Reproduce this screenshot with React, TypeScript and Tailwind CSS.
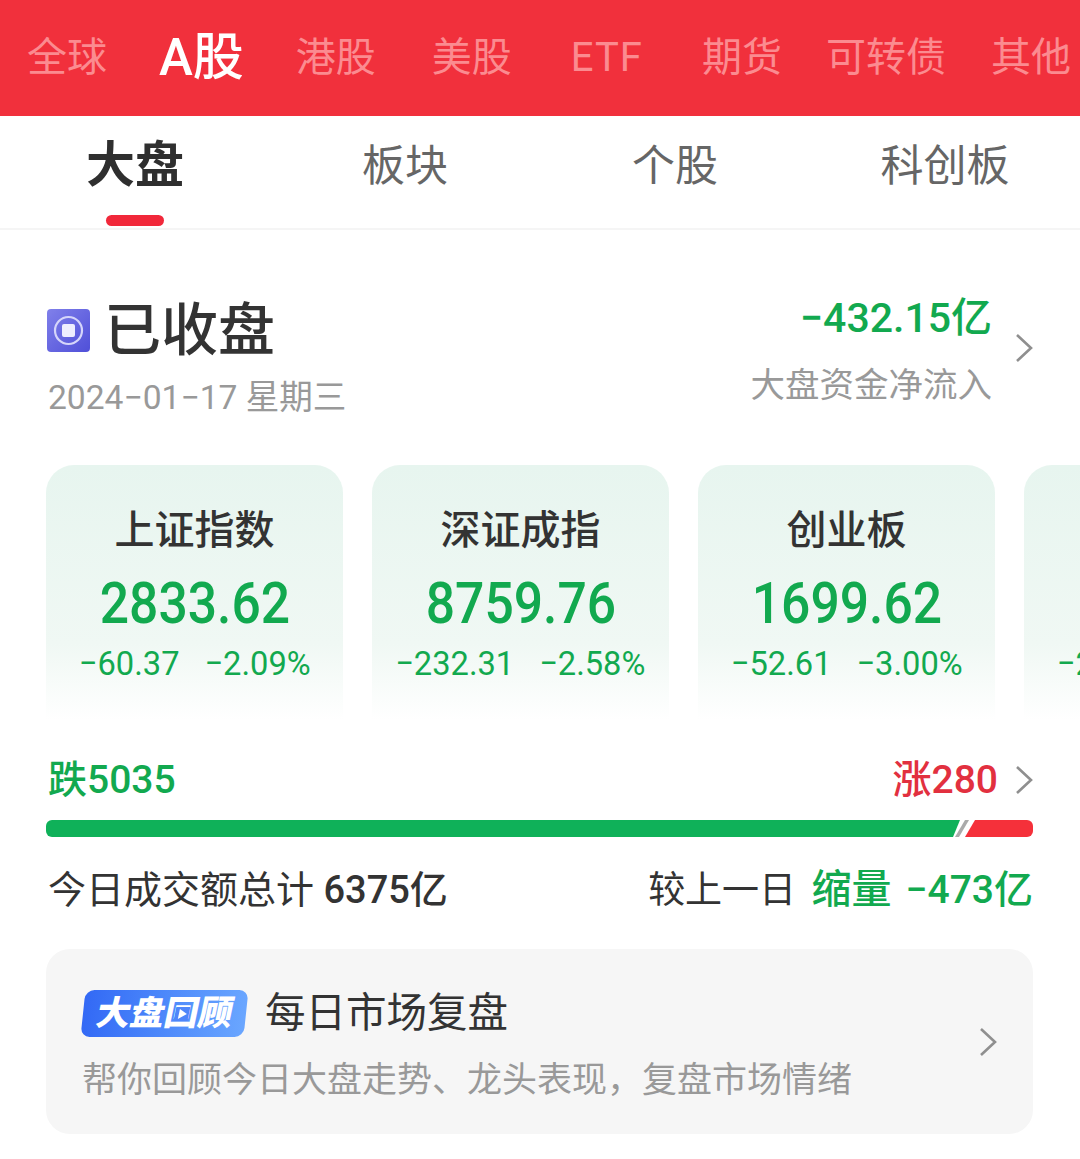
const cjk = '[font-family:Roboto,"Noto_Sans_CJK_SC",sans-serif]';

const markets = [
  { label: '全球', className: 'text-[40px] text-[#fb8b90]' },
  { label: 'A股', className: 'ml-[52px] text-[51px] font-medium text-white' },
  { label: '港股', className: 'ml-[52px] text-[40px] text-[#fb8b90]' },
  { label: '美股', className: 'ml-[56px] text-[40px] text-[#fb8b90]' },
  { label: 'ETF', className: 'ml-[59px] text-[40px] tracking-[1px] text-[#fb8b90]' },
  { label: '期货', className: 'ml-[59px] text-[40px] text-[#fb8b90]' },
  { label: '可转债', className: 'ml-[44px] text-[40px] text-[#fb8b90]' },
  { label: '其他', className: 'ml-[45px] text-[40px] text-[#fb8b90]' },
];

const tabs = [{ label: '大盘', active: true }, { label: '板块' }, { label: '个股' }, { label: '科创板' }];

const indexes = [
  { name: '上证指数', value: '2833.62', change: '−60.37', pct: '−2.09%' },
  { name: '深证成指', value: '8759.76', change: '−232.31', pct: '−2.58%' },
  { name: '创业板', value: '1699.62', change: '−52.61', pct: '−3.00%' },
  { name: '科创50', value: '738.21', change: '−23.45', pct: '−3.08%' },
];

const Chevron = ({ className }: { className: string }) => (
  <svg viewBox="0 0 18 30" fill="none" stroke="#8f8f8f" strokeWidth="2.6" className={className}>
    <path d="M2 2l14 13L2 28" />
  </svg>
);

export default function App() {
  return (
    <div className={`h-[1159px] w-[1080px] overflow-hidden bg-white ${cjk}`}>
      <div className="flex h-[116px] items-center whitespace-nowrap bg-[#f1303c] pl-[27px]">
        {markets.map((m) => (
          <span key={m.label} className={m.className}>
            {m.label}
          </span>
        ))}
      </div>

      <div className="grid h-[114px] grid-cols-4 border-b-2 border-[#f5f5f5]">
        {tabs.map((t) => (
          <div key={t.label} className="flex flex-col items-center pt-[20px]">
            <span
              className={
                t.active
                  ? 'h-[60px] text-[49px] leading-[60px] font-bold text-[#2f2f2f]'
                  : 'h-[60px] text-[43px] leading-[60px] text-[#666666]'
              }
            >
              {t.label}
            </span>
            {t.active && <span className="mt-[19px] h-[11px] w-[58px] rounded-full bg-[#f1283a]" />}
          </div>
        ))}
      </div>

      <div className="pl-[46px]">
        <div className="flex justify-between pt-[70px] pr-[47px]">
          <div>
            <div className="flex h-[60px] items-center pt-[1px] pl-[1px]">
              <svg viewBox="0 0 43 43" className="h-[43px] w-[43px]">
                <defs>
                  <linearGradient id="closed" x1="0" y1="0" x2="1" y2="1">
                    <stop offset="0" stopColor="#8080ea" />
                    <stop offset="1" stopColor="#4f4fd8" />
                  </linearGradient>
                </defs>
                <rect width="43" height="43" rx="4" fill="url(#closed)" />
                <circle cx="21.5" cy="21.5" r="13.5" fill="none" stroke="#d5d5fa" strokeWidth="2.2" />
                <rect x="15" y="15" width="13" height="13" rx="2" fill="#eeeefe" />
              </svg>
              <span className="ml-[14px] text-[57px] leading-[60px] font-medium text-[#333333]">已收盘</span>
            </div>
            <div className="mt-[18px] ml-[2px] h-[40px] text-[33.6px] leading-[40px] text-[#999999]">2024−01−17 星期三</div>
          </div>
          <div className="flex items-start">
            <div className="flex flex-col items-end">
              <span className="-mt-[4px] h-[44px] text-[41px] leading-[44px] font-medium text-[#12a94f]">−432.15亿</span>
              <span className="mt-[25px] h-[40px] text-[34.5px] leading-[40px] text-[#999999]">大盘资金净流入</span>
            </div>
            <Chevron className="mt-[33px] ml-[23px] h-[30px] w-[18px]" />
          </div>
        </div>

        <div className="mt-[47px] flex gap-[29px]">
          {indexes.map((x) => (
            <div
              key={x.name}
              className="flex h-[255px] w-[297px] shrink-0 flex-col items-center rounded-t-[28px] bg-linear-to-b from-[#e7f5ef] via-[#f0f8f4] via-70% to-white pt-[42px]"
            >
              <div className="h-[48px] text-[40px] leading-[48px] font-medium text-[#333333]">{x.name}</div>
              <div className="mt-[18px] h-[60px] scale-x-[.89] text-[58px] leading-[60px] font-medium text-[#12a94f]">
                {x.value}
              </div>
              <div className="mt-[10px] flex h-[40px] scale-x-[.96] gap-[26px] text-[34px] leading-[40px] text-[#12a94f]">
                <span>{x.change}</span>
                <span>{x.pct}</span>
              </div>
            </div>
          ))}
        </div>

        <div className="pr-[47px]">
          <div className="mt-[40px] flex h-[40px] items-center justify-between">
            <span className="ml-[2px] text-[39px] leading-[40px] font-medium text-[#12a94f]">跌5035</span>
            <div className="flex items-center">
              <span className="text-[39px] leading-[40px] font-medium text-[#e2303f]">涨280</span>
              <Chevron className="ml-[17px] h-[30px] w-[18px]" />
            </div>
          </div>

          <div className="mt-[20px] flex h-[17px]">
            <div className="min-w-0 flex-1 rounded-l-[6px] bg-[#0fb159] [clip-path:polygon(0_0,100%_0,calc(100%-7px)_100%,0_100%)]" />
            <div className="ml-[-5px] h-[17px] w-[14px] bg-[#aaaaaa] [clip-path:polygon(10px_0,100%_0,4px_100%,0_100%)]" />
            <div className="ml-[-4px] h-[17px] w-[68px] rounded-r-[6px] bg-[#f5303a] [clip-path:polygon(10px_0,100%_0,100%_100%,0_100%)]" />
          </div>

          <div className="mt-[31px] flex h-[44px] items-center justify-between text-[38px] leading-[44px] text-[#333333]">
            <span className="ml-[2px]">
              今日成交额总计 <span className="font-medium">6375亿</span>
            </span>
            <span>
              <span className="text-[37px]">较上一日</span> <span className="ml-[6px] text-[40px] font-medium text-[#12a94f]">缩量</span>
              <span className="ml-[14px] text-[39px] font-medium text-[#12a94f]">−473亿</span>
            </span>
          </div>

          <div className="mt-[37px] flex h-[185px] items-center justify-between rounded-[24px] bg-[#f6f6f6] pt-[8px] pr-[36px] pl-[36px]">
            <div>
              <div className="flex h-[47px] items-center">
                <div className="ml-[1px] flex h-[47px] w-[163px] -skew-x-[6deg] items-center justify-center rounded-[9px] bg-linear-to-r from-[#3369f5] to-[#6aa6ff] text-[34px] font-black text-white">
                  <span className="inline-flex -skew-x-[6deg]">
                    大盘
                    <span className="relative">
                      回
                      <span className="absolute inset-0 flex items-center justify-center">
                        <span className="flex h-[14px] w-[14px] items-center justify-center bg-[#4f86fa]">
                          <span className="ml-[2px] h-0 w-0 border-y-[5px] border-l-[8px] border-y-transparent border-l-white" />
                        </span>
                      </span>
                    </span>
                    顾
                  </span>
                </div>
                <span className="ml-[19px] text-[40.5px] leading-[47px] text-[#333333]">每日市场复盘</span>
              </div>
              <div className="mt-[24px] h-[40px] text-[35px] leading-[40px] text-[#999999]">
                帮你回顾今日大盘走势、龙头表现{'\uFF0C'}复盘市场情绪
              </div>
            </div>
            <Chevron className="-mt-[8px] h-[30px] w-[18px]" />
          </div>
        </div>
      </div>
    </div>
  );
}
